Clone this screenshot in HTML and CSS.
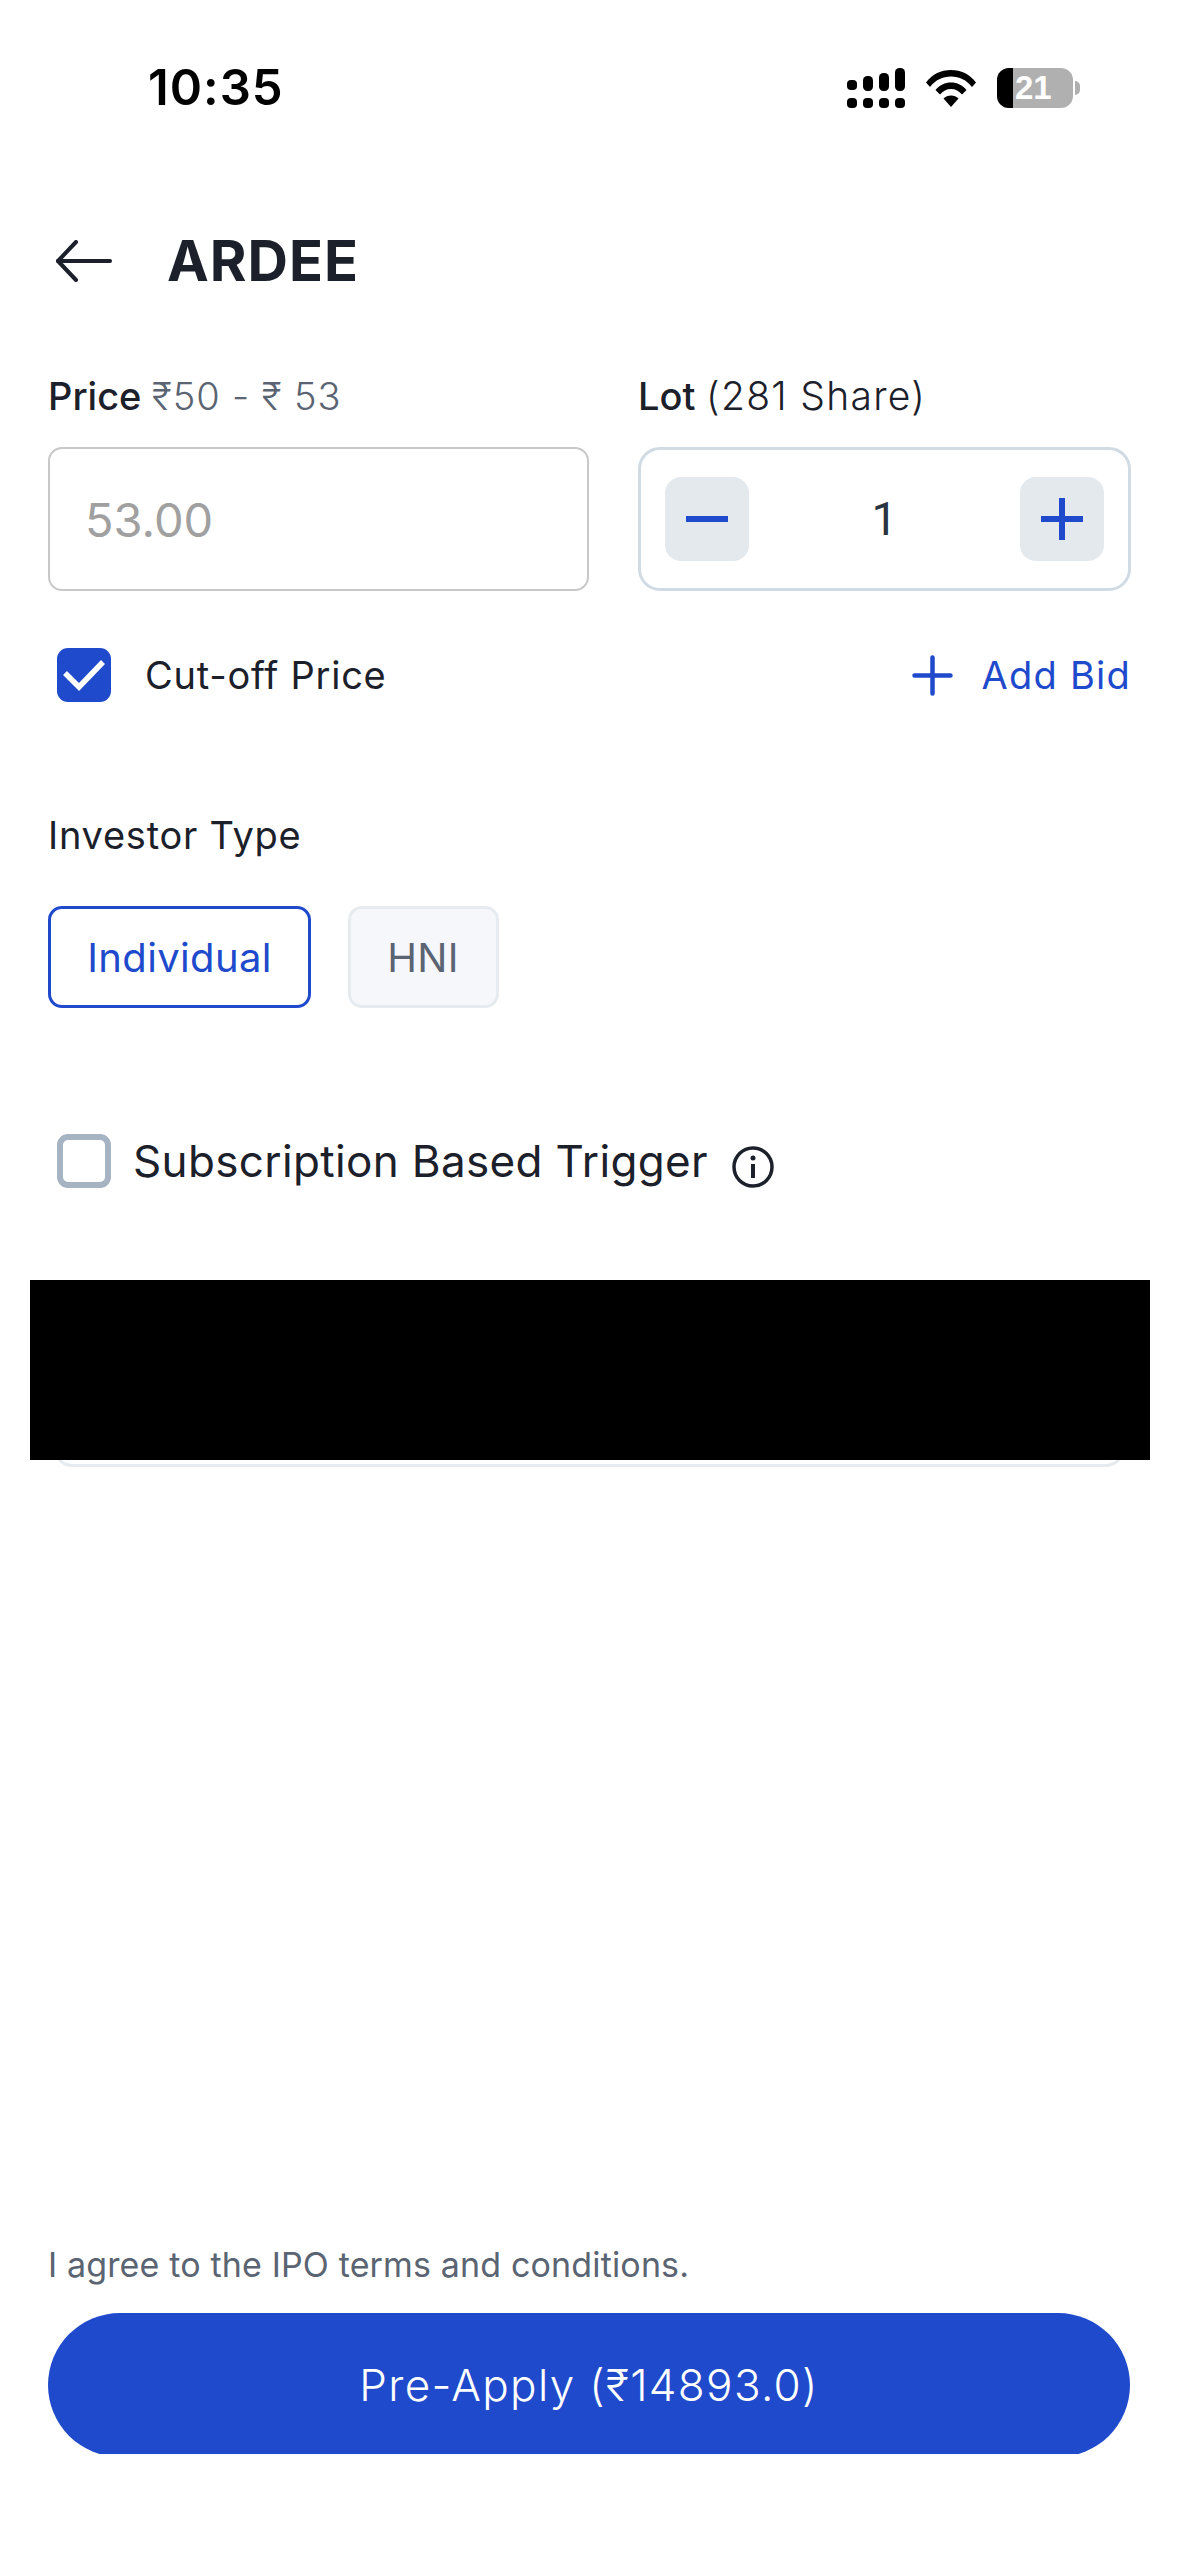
FILE: index.html
```html
<!DOCTYPE html>
<html lang="en">
<head>
<meta charset="utf-8">
<title>ARDEE</title>
<link rel="stylesheet" href="styles.css">
</head>
<body>
<div class="page">
  <div class="status">
    <span class="time">10:35</span>
    <div class="status-icons">
      <svg class="signal" width="58" height="40" viewBox="0 0 58 40" fill="#000">
        <rect x="0" y="12" width="10" height="10" rx="4"/><rect x="16" y="8" width="10" height="15" rx="4.500"/><rect x="32" y="5" width="10" height="18" rx="4.500"/><rect x="48" y="0" width="10" height="23" rx="4.500"/>
        <rect x="0" y="30" width="10" height="10" rx="4"/><rect x="16" y="30" width="10" height="10" rx="4"/><rect x="32" y="30" width="10" height="10" rx="4"/><rect x="48" y="30" width="10" height="10" rx="4"/>
      </svg>
      <svg class="wifi" width="50" height="38" viewBox="0 0 50 38" fill="#000">
        <path d="M0 13.500C6.500 5 15 1 25 1s18.500 4 25 12.500l-4 4.500C40.500 11 33.500 7.500 25 7.500S9.500 11 4 18z"/>
        <path d="M9.500 21C13.500 16 19 13.500 25 13.500S36.500 16 40.500 21l-4.500 4.500C33 22 29.500 20 25 20s-8 2-11 5.500z"/>
        <path d="M17.500 29.500C19.500 27.500 22 26.500 25 26.500s5.500 1 7.500 3L25 38z"/>
      </svg>
      <div class="battery">
        <div class="battery-body"><span class="battery-level"></span><span class="battery-text">21</span></div>
        <span class="battery-nub"></span>
      </div>
    </div>
  </div>

  <header class="header">
    <svg class="back" width="56" height="42" viewBox="0 0 56 42" fill="none" stroke="#1b202a" stroke-width="4" stroke-linecap="round" stroke-linejoin="round">
      <path d="M54 21H2"/><path d="M20 2L2 21l18 19"/>
    </svg>
    <h1 class="title">ARDEE</h1>
  </header>

  <main class="form">
    <div class="bid-grid">
      <div class="field-label"><span class="strong">Price</span> <span class="muted">₹50 - ₹ 53</span></div>
      <div class="field-label"><span class="strong">Lot</span> <span class="soft">(281 Share)</span></div>
      <div class="price-input">53.00</div>
      <div class="stepper">
        <button class="step-btn" type="button">
          <svg width="42" height="6" viewBox="0 0 42 6"><rect width="42" height="6" fill="#204acc"/></svg>
        </button>
        <span class="step-value">1</span>
        <button class="step-btn" type="button">
          <svg width="42" height="42" viewBox="0 0 42 42" fill="#204acc"><rect y="18" width="42" height="6"/><rect x="18" width="6" height="42"/></svg>
        </button>
      </div>
    </div>

    <div class="cutoff-row">
      <div class="check-group">
        <span class="check check-on">
          <svg width="42" height="32" viewBox="0 0 42 32" fill="none" stroke="#fff" stroke-width="5.500"><path d="M2 14l14 14L40 3"/></svg>
        </span>
        <span class="cutoff-label">Cut-off Price</span>
      </div>
      <div class="add-bid">
        <svg width="41" height="41" viewBox="0 0 41 41" fill="none" stroke="#204acc" stroke-width="4.500" stroke-linecap="round"><path d="M2.500 20.500h36M20.500 2.500v36"/></svg>
        <span>Add Bid</span>
      </div>
    </div>

    <div class="investor-label">Investor Type</div>
    <div class="investor-options">
      <div class="option option-on">Individual</div>
      <div class="option option-off">HNI</div>
    </div>

    <div class="trigger-row">
      <span class="check check-off"></span>
      <span class="trigger-label">Subscription Based Trigger</span>
      <svg class="info" width="42" height="42" viewBox="0 0 42 42" fill="none" stroke="#1b202a" stroke-width="3.500">
        <circle cx="21" cy="21" r="19"/><path d="M21 18v14" stroke-width="4"/><circle cx="21" cy="12" r="2.500" fill="#1b202a" stroke="none"/>
      </svg>
    </div>

    <div class="card"><div class="mask"></div></div>
  </main>

  <footer class="footer">
    <p class="terms">I agree to the IPO terms and conditions.</p>
    <div class="apply-clip"><button class="apply" type="button">Pre-Apply (₹14893.0)</button></div>
  </footer>
</div>
</body>
</html>
```

FILE: styles.css
```css
* { box-sizing: border-box; }
html, body { margin: 0; padding: 0; background: #fff; }
body { font-family: Inter, "Noto Sans", sans-serif; color: #1b202a; }
.page { width: 1179px; height: 2556px; display: flex; flex-direction: column; overflow: hidden; background: #fff; }

.status { height: 176px; display: flex; align-items: center; justify-content: space-between; padding: 0 99px 0 148px; }
.time { font-family: Inter, sans-serif; font-weight: 600; font-size: 49px; line-height: 60px; letter-spacing: 1px; color: #000; }
.status-icons { display: flex; align-items: center; }
.wifi { margin-left: 21.500px; }
.battery { display: flex; align-items: center; margin-left: 21px; }
.battery-body { position: relative; width: 76px; height: 40px; border-radius: 12px; background: #b0b0b0; overflow: hidden; display: flex; align-items: center; }
.battery-level { width: 16px; height: 40px; background: #000; }
.battery-text { font-family: "Liberation Sans", Arial, sans-serif; font-weight: 700; font-size: 33px; line-height: 40px; color: #fff; margin-left: 2px; }
.battery-nub { width: 5px; height: 14px; margin-left: 2px; background: #b0b0b0; border-radius: 0 7px 7px 0; }

.header { height: 170px; display: flex; align-items: center; padding-left: 56px; }
.title { margin: 0 0 0 55px; font-size: 56px; line-height: 70px; font-weight: 700; letter-spacing: 1px; color: #1b202a; }

.form { display: flex; flex-direction: column; padding: 0 48px 0 48px; }
.bid-grid { display: grid; grid-template-columns: 541px 493px; column-gap: 49px; row-gap: 26px; margin-top: 25px; }
.field-label { font-size: 38px; line-height: 50px; white-space: nowrap; }
.strong { font-weight: 500; color: #1b202a; }
.muted { font-weight: 300; letter-spacing: 0.9px; color: #5a6472; }
.soft { font-weight: 300; font-size: 39px; letter-spacing: 1.3px; color: #1b202a; }
.price-input { height: 144px; border: 2px solid #c8c8c8; border-radius: 14px; display: flex; align-items: center; padding-left: 35px; font-family: Inter, sans-serif; font-size: 47px; color: #a0a0a0; }
.stepper { height: 144px; border: 3px solid #d1dbe4; border-radius: 22px; display: flex; align-items: center; justify-content: space-between; padding: 0 24px; }
.step-btn { width: 84px; height: 84px; padding: 0; border: 0; border-radius: 16px; background: #e4e9ee; display: flex; align-items: center; justify-content: center; }
.step-value { font-family: Roboto, sans-serif; font-size: 46px; font-weight: 400; color: #2a3440; }

.cutoff-row { display: flex; align-items: center; justify-content: space-between; height: 54px; margin-top: 57px; padding-left: 9px; }
.check-group { display: flex; align-items: center; gap: 34px; }
.check { flex: none; width: 54px; height: 54px; border-radius: 11px; display: flex; align-items: center; justify-content: center; }
.check-on { background: #204acc; }
.cutoff-label { font-size: 38px; line-height: 50px; font-weight: 400; letter-spacing: 0.75px; color: #1b202a; }
.add-bid { display: flex; align-items: center; gap: 28px; font-size: 38px; line-height: 50px; font-weight: 400; letter-spacing: 1.25px; color: #204acc; }

.investor-label { margin-top: 108px; font-size: 38px; line-height: 50px; font-weight: 400; letter-spacing: 0.75px; color: #1b202a; }
.investor-options { display: flex; gap: 36.500px; margin-top: 46px; }
.option { height: 102px; border-radius: 14px; display: flex; align-items: center; justify-content: center; font-size: 40px; font-weight: 400; letter-spacing: 0.35px; }
.option-on { width: 263px; border: 3px solid #204acc; color: #204acc; background: #fff; }
.option-off { width: 151px; border: 3px solid #e6ebf0; color: #5a6472; background: #f5f7fa; }

.trigger-row { display: flex; align-items: center; height: 54px; margin-top: 126px; padding-left: 9px; }
.check-off { border: 6px solid #a6b3c2; background: #fff; }
.trigger-label { margin-left: 22px; font-size: 44px; line-height: 54px; font-weight: 400; letter-spacing: 0.35px; color: #1b202a; white-space: nowrap; }
.info { margin-left: 24px; margin-top: 12px; }

.card { position: relative; height: 185px; margin: 94px 7px 0 6px; border: 3px solid #e6ebf0; border-radius: 18px; background: #fff; }
.mask { position: absolute; top: -5px; left: -27px; right: -29px; bottom: 4px; background: #000; }

.footer { margin-top: auto; padding: 0 49px 102px 48px; }
.terms { margin: 0 0 23px; font-size: 34px; line-height: 50px; font-weight: 400; letter-spacing: 0.15px; color: #5a6472; }
.apply-clip { height: 141px; overflow: hidden; }
.apply { display: block; width: 100%; height: 144px; border: 0; border-radius: 72px; background: #204acc; color: #fff; font-family: inherit; font-size: 44px; font-weight: 300; letter-spacing: 1.35px; }
```
